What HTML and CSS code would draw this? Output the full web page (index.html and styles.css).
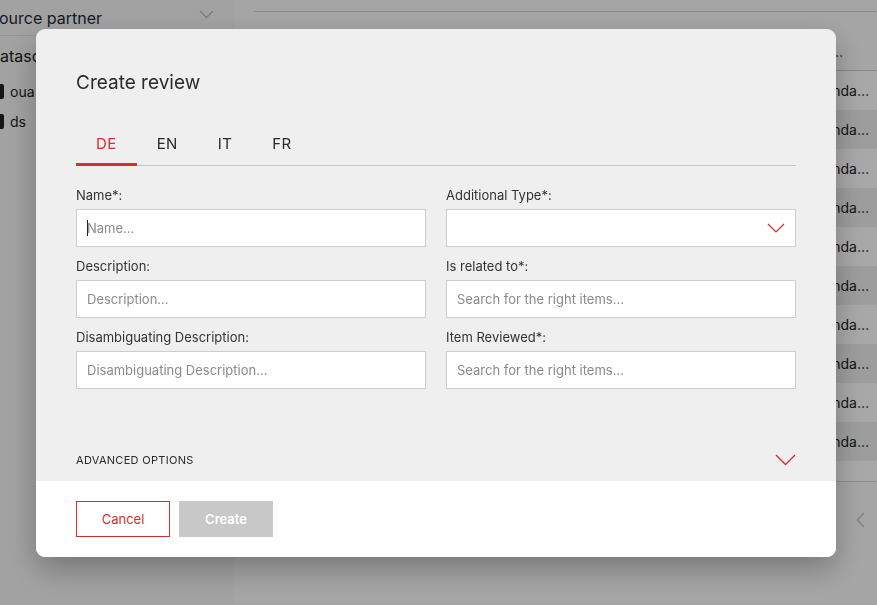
FILE: index.html
```html
<!DOCTYPE html>
<html lang="en">
<head>
<meta charset="utf-8">
<title>Create review</title>
<link rel="stylesheet" href="styles.css">
</head>
<body>
<div class="page">
  <aside class="sidebar">
    <div class="side-head">
      <span class="side-title">ource partner</span>
      <svg class="side-chev" width="15" height="9" viewBox="0 0 15 9"><path d="M1 1l6.5 6.5L14 1" fill="none" stroke="#bdbdbd" stroke-width="1.3"/></svg>
    </div>
    <div class="side-group">ataso</div>
    <ul class="side-list">
      <li><span class="box"></span>oua</li>
      <li><span class="box"></span>ds</li>
    </ul>
  </aside>
  <main class="main">
    <div class="main-top"></div>
    <div class="table">
      <div class="thead"><span>…</span></div>
      <div class="row"><span>Standa…</span></div>
      <div class="row alt"><span>Standa…</span></div>
      <div class="row"><span>Standa…</span></div>
      <div class="row alt"><span>Standa…</span></div>
      <div class="row"><span>Standa…</span></div>
      <div class="row alt"><span>Standa…</span></div>
      <div class="row"><span>Standa…</span></div>
      <div class="row alt"><span>Standa…</span></div>
      <div class="row"><span>Standa…</span></div>
      <div class="row alt"><span>Standa…</span></div>
      <div class="row tail"></div>
    </div>
    <div class="pager">
      <svg width="9" height="16" viewBox="0 0 9 16"><path d="M8 1L1.5 8L8 15" fill="none" stroke="#c4c4c4" stroke-width="1.5"/></svg>
    </div>
  </main>
</div>

<div class="overlay">
  <div class="modal">
    <div class="modal-body">
      <h2 class="modal-title">Create review</h2>
      <nav class="tabs">
        <span class="tab active">DE</span>
        <span class="tab">EN</span>
        <span class="tab">IT</span>
        <span class="tab">FR</span>
      </nav>
      <div class="form">
        <div class="field">
          <label class="label">Name*:</label>
          <div class="input focused"><span class="caret"></span><span class="ph">Name…</span></div>
        </div>
        <div class="field">
          <label class="label">Additional Type*:</label>
          <div class="input select">
            <svg width="18" height="10" viewBox="0 0 18 10"><path d="M1 1l8 8 8-8" fill="none" stroke="#d32f2f" stroke-width="1.2"/></svg>
          </div>
        </div>
        <div class="field">
          <label class="label">Description:</label>
          <div class="input"><span class="ph">Description…</span></div>
        </div>
        <div class="field">
          <label class="label">Is related to*:</label>
          <div class="input"><span class="ph">Search for the right items…</span></div>
        </div>
        <div class="field">
          <label class="label">Disambiguating Description:</label>
          <div class="input"><span class="ph">Disambiguating Description…</span></div>
        </div>
        <div class="field">
          <label class="label">Item Reviewed*:</label>
          <div class="input"><span class="ph">Search for the right items…</span></div>
        </div>
      </div>
      <div class="advanced">
        <span>ADVANCED OPTIONS</span>
        <svg width="21" height="12" viewBox="0 0 21 12"><path d="M1 1l9.5 9.5L20 1" fill="none" stroke="#d32f2f" stroke-width="1.4"/></svg>
      </div>
    </div>
    <div class="modal-footer">
      <button class="btn btn-cancel">Cancel</button>
      <button class="btn btn-create">Create</button>
    </div>
  </div>
</div>
</body>
</html>
```
FILE: styles.css
```css
* { box-sizing: border-box; }
html, body { margin: 0; padding: 0; }
body {
  width: 877px;
  height: 605px;
  overflow: hidden;
  font-family: Inter, "Noto Sans", sans-serif;
  color: #222;
  background: #fbfbfb;
}
.page {
  display: flex;
  height: 605px;
}
.sidebar {
  width: 234px;
  flex: none;
  background: #f6f6f6;
}
.side-head {
  height: 36px;
  display: flex;
  align-items: center;
  justify-content: space-between;
  padding: 0 20px 0 0;
  border-bottom: 1px solid #e2e2e2;
}
.side-title {
  font-size: 16px;
  color: #1e2a38;
  margin-left: -1px;
}
.side-chev { margin-top: -6px; }
.side-group {
  font-size: 16px;
  height: 40px;
  line-height: 40px;
}
.side-list {
  list-style: none;
  margin: 0;
  padding: 0;
}
.side-list li {
  display: flex;
  align-items: center;
  height: 30px;
  font-size: 14px;
  gap: 6px;
}
.side-list .box {
  width: 4px;
  height: 15px;
  background: #222;
  border-radius: 0 2px 2px 0;
}
.main {
  flex: 1;
  background: #fbfbfb;
  display: flex;
  flex-direction: column;
}
.main-top {
  height: 12px;
  margin-left: 20px;
  border-bottom: 1px solid #cfcfcf;
}
.table {
  margin-top: 20px;
}
.thead {
  height: 39px;
  border-bottom: 1px solid #d0d0d0;
  display: flex;
  align-items: center;
  justify-content: flex-end;
  padding-right: 34px;
  font-size: 14px;
}
.row {
  height: 39px;
  display: flex;
  align-items: center;
  justify-content: flex-end;
  padding-right: 8px;
  font-size: 14px;
  background: #ffffff;
}
.row.alt { background: #efefef; }
.row.tail {
  height: 21px;
  border-bottom: 1px solid #d8d8d8;
}
.pager {
  display: flex;
  justify-content: flex-end;
  padding: 30px 12px 0 0;
}

/* overlay + modal */
.overlay {
  position: fixed;
  inset: 0;
  background: rgba(0, 0, 0, 0.34);
  padding: 29px 0 0 36px;
}
.modal {
  width: 800px;
  height: 528px;
  border-radius: 9px;
  overflow: hidden;
  background: #efefef;
  display: flex;
  flex-direction: column;
  box-shadow: 0 12px 30px rgba(0, 0, 0, 0.28);
}
.modal-body {
  flex: 1;
  padding: 42px 40px 0 40px;
}
.modal-title {
  margin: 0;
  font-size: 19px;
  line-height: 24px;
  font-weight: 400;
  color: #2b2b2b;
}
.tabs {
  display: flex;
  margin-top: 27px;
  border-bottom: 1px solid #c4c4c4;
}
.tab {
  padding: 0 20px;
  height: 44px;
  line-height: 44px;
  font-size: 15px;
  color: #2a2a2a;
  letter-spacing: 0.4px;
  border-bottom: 3px solid transparent;
  margin-bottom: -1px;
}
.tab.active {
  color: #d32f2f;
  border-bottom-color: #d32f2f;
}
.form {
  display: grid;
  grid-template-columns: 350px 350px;
  column-gap: 20px;
  row-gap: 10px;
  margin-top: 20px;
}
.field {
  display: flex;
  flex-direction: column;
  gap: 5px;
}
.label {
  font-size: 13px;
  line-height: 18px;
  color: #333;
}
.input {
  height: 38px;
  background: #fff;
  border: 1px solid #cdcdcd;
  display: flex;
  align-items: center;
  padding: 0 10px;
  font-size: 13px;
}
.input .ph { color: #8a8a8a; }
.caret {
  width: 1px;
  height: 16px;
  background: #222;
  margin-right: -1px;
}
.input.select {
  justify-content: flex-end;
  padding-right: 10px;
}
.advanced {
  display: flex;
  align-items: center;
  justify-content: space-between;
  height: 20px;
  margin-top: 61px;
  font-size: 11px;
  letter-spacing: 0.3px;
  color: #2a2a2a;
}
.modal-footer {
  height: 76px;
  background: #fff;
  display: flex;
  align-items: center;
  gap: 9px;
  padding: 0 40px;
}
.btn {
  width: 94px;
  height: 36px;
  font-family: inherit;
  font-size: 13px;
  border: 1px solid transparent;
  border-radius: 0;
}
.btn-cancel {
  background: #fff;
  border-color: #d32f2f;
  color: #d32f2f;
}
.btn-create {
  background: #c8c8c8;
  color: #fff;
  font-weight: 600;
}
```
